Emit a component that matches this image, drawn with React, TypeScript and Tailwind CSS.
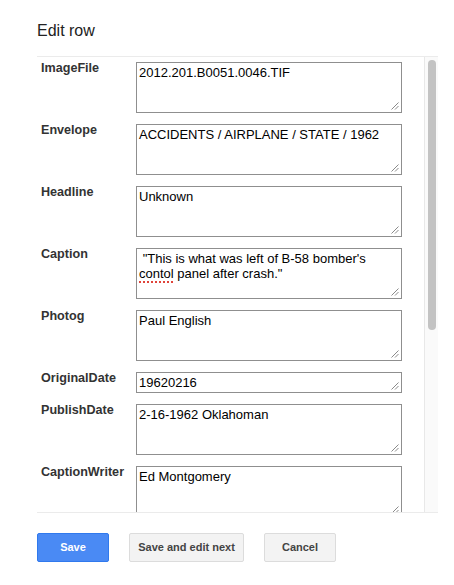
import type { ReactNode } from 'react';

type Field = { label: string; value: ReactNode; short?: boolean };

const fields: Field[] = [
  { label: 'ImageFile', value: '2012.201.B0051.0046.TIF' },
  { label: 'Envelope', value: 'ACCIDENTS / AIRPLANE / STATE / 1962' },
  { label: 'Headline', value: 'Unknown' },
  {
    label: 'Caption',
    value: (
      <>
        {' "This is what was left of B-58 bomber\'s '}
        <span className="underline decoration-dotted decoration-[#e0443a] decoration-[1.5px] underline-offset-[3px]">
          contol
        </span>
        {' panel after crash."'}
      </>
    ),
  },
  { label: 'Photog', value: 'Paul English' },
  { label: 'OriginalDate', value: '19620216', short: true },
  { label: 'PublishDate', value: '2-16-1962 Oklahoman' },
  { label: 'CaptionWriter', value: 'Ed Montgomery' },
];

function Grip() {
  return (
    <svg
      className="absolute right-[2px] bottom-[2px]"
      width="8"
      height="8"
      viewBox="0 0 8 8"
    >
      <path d="M7.5 0.5 L0.5 7.5 M7.5 4 L4 7.5" stroke="#8a8a8a" strokeWidth="1" />
    </svg>
  );
}

function FakeTextarea({ value, short }: { value: ReactNode; short?: boolean }) {
  return (
    <div
      className={
        'relative w-[266px] shrink-0 border border-[#8f8f8f] bg-white p-[2px] text-[13px] leading-[15px] text-black whitespace-pre-wrap ' +
        (short ? 'h-[21px]' : 'h-[51px]')
      }
    >
      {value}
      <Grip />
    </div>
  );
}

export default function App() {
  const font = { fontFamily: '"Liberation Sans", Arial, sans-serif' };

  return (
    <div className="min-h-screen w-[454px] bg-white pl-[37px]" style={font}>
      <h2 className="mt-[21px] text-[16px] leading-[20px] font-normal text-[#222]">Edit row</h2>

      <div className="mt-[15px] flex h-[457px] w-[401px] border-y border-[#ebebeb]">
        <div className="flex-1 overflow-hidden">
          <div className="flex flex-col gap-[11px] pt-[5px] pl-[4px]">
            {fields.map((f) => (
              <div key={f.label} className="flex">
                <div className="w-[95px] shrink-0 text-[12.6px] leading-[12px] font-bold text-[#333]">
                  {f.label}
                </div>
                <FakeTextarea value={f.value} short={f.short} />
              </div>
            ))}
          </div>
        </div>
        <div className="w-[14px] shrink-0 border-l border-[#e8e8e8] bg-[#fafafa] pt-[3px] pl-[3px]">
          <div className="h-[270px] w-[8px] rounded-full bg-[#c3c3c3]" />
        </div>
      </div>

      <div className="mt-[20px] flex gap-[20px]">
        <button
          type="button"
          className="h-[29px] w-[72px] rounded-[2px] border border-[#3079ed] bg-[#4a8af4] text-[11px] font-bold text-white"
        >
          Save
        </button>
        <button
          type="button"
          className="h-[29px] w-[115px] rounded-[2px] border border-[#dcdcdc] bg-[#f3f3f3] text-[11px] font-bold text-[#444]"
        >
          Save and edit next
        </button>
        <button
          type="button"
          className="h-[29px] w-[72px] rounded-[2px] border border-[#dcdcdc] bg-[#f3f3f3] text-[11px] font-bold text-[#444]"
        >
          Cancel
        </button>
      </div>
    </div>
  );
}
